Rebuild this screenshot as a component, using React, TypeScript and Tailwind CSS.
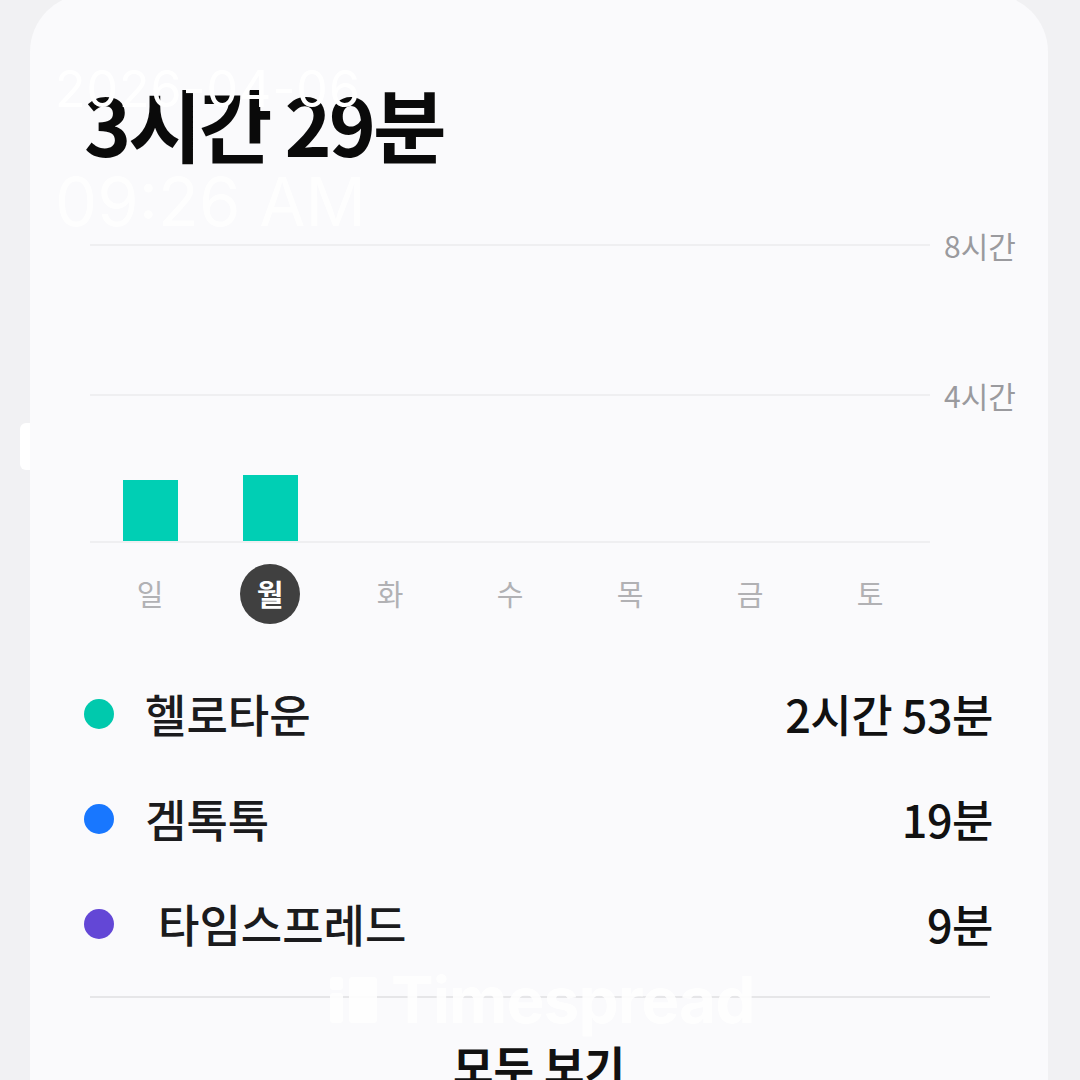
import React from "react";

const days = ["일", "월", "화", "수", "목", "금", "토"];
const bars: Record<number, number> = { 0: 61, 1: 66 };

const apps = [
  { name: "헬로타운", time: "2시간 53분", color: "bg-[#00c9ad]", indent: false },
  { name: "겜톡톡", time: "19분", color: "bg-[#1877ff]", indent: false },
  { name: "타임스프레드", time: "9분", color: "bg-[#6347d6]", indent: true },
];

export default function App() {
  return (
    <div className="relative w-[1080px] h-[1080px] overflow-hidden bg-[#f1f1f3] font-['Noto_Sans_CJK_KR','Noto_Sans',sans-serif]">
      <div className="ml-[30px] mr-[32px] mt-[-6px] h-[1100px] rounded-t-[58px] bg-[#fafafc] px-[60px]">
        {/* total */}
        <div className="pt-[88px]">
          <h1 className="-ml-[6px] text-[80px] leading-none font-bold tracking-[-3px] text-[#0a0a0a]">3시간 29분</h1>
        </div>

        {/* chart */}
        <div className="mt-[82px] flex w-[930px]">
          <div className="relative w-[840px]">
            <div className="h-[150px] border-t-2 border-[#efeff1]" />
            <div className="h-[149px] border-t-2 border-b-2 border-[#efeff1]" />
            <div className="absolute inset-x-0 bottom-[2px] grid grid-cols-7 items-end h-[295px]">
              {days.map((d, i) => (
                <div key={d} className="flex justify-center">
                  {bars[i] ? <div className="w-[55px] bg-[#00cfb4]" style={{ height: bars[i] }} /> : null}
                </div>
              ))}
            </div>
          </div>
          <div className="flex flex-col pl-[14px] text-[30px] leading-none text-[#9a9a9e]">
            <span className="-mt-[14px]">8시간</span>
            <span className="mt-[120px]">4시간</span>
          </div>
        </div>

        <div className="mt-[21px] grid w-[840px] grid-cols-7">
          {days.map((d, i) => (
            <div key={d} className="flex justify-center">
              {i === 1 ? (
                <div className="flex h-[60px] w-[60px] items-center justify-center rounded-full bg-[#404040] text-[29px] font-bold text-white">{d}</div>
              ) : (
                <div className="flex h-[60px] items-center text-[29px] text-[#b1b1b4]">{d}</div>
              )}
            </div>
          ))}
        </div>

        {/* legend */}
        <div className="mt-[37px] -ml-[6px] -mr-[5px]">
          {apps.map((a) => (
            <div key={a.name} className="flex h-[105px] items-center justify-between">
              <div className="flex items-center">
                <span className={`h-[30px] w-[30px] rounded-full ${a.color}`} />
                <span className={`${a.indent ? "ml-[44px]" : "ml-[31px]"} text-[45px] font-medium text-[#1b1b1d]`}>{a.name}</span>
              </div>
              <span className="text-[45px] font-medium tracking-[-0.5px] text-[#111]">{a.time}</span>
            </div>
          ))}
        </div>

        <div className="mt-[20px] h-[2px] w-[900px] bg-[#e6e6e8]" />
        <div className="mt-[34px] text-center text-[44px] font-bold text-[#111]">모두 보기</div>
      </div>

      {/* recording overlay */}
      <div className="absolute left-[55px] top-[64px] font-['Inter',sans-serif] text-white">
        <div className="text-[50px] leading-none tracking-[1px]">2026-04-06</div>
        <div className="mt-[54px] text-[67px] leading-none opacity-80">09:26 AM</div>
      </div>
      <div className="absolute left-[20px] top-[423px] h-[47px] w-[10px] rounded-l-[6px] bg-white" />
      <div className="absolute left-[330px] top-[968px] flex items-center gap-[14px] font-['Inter',sans-serif] text-white opacity-90">
        <div className="flex items-start gap-[6px]">
          <div className="flex flex-col gap-[3px]">
            <div className="h-[13px] w-[13px] rounded-[3px] bg-white" />
            <div className="h-[30px] w-[13px] rounded-[3px] bg-white" />
          </div>
          <div className="h-[46px] w-[28px] rounded-[3px] bg-white" />
        </div>
        <span className="text-[64px] font-bold leading-none tracking-[-1px]">Timespread</span>
      </div>
    </div>
  );
}
